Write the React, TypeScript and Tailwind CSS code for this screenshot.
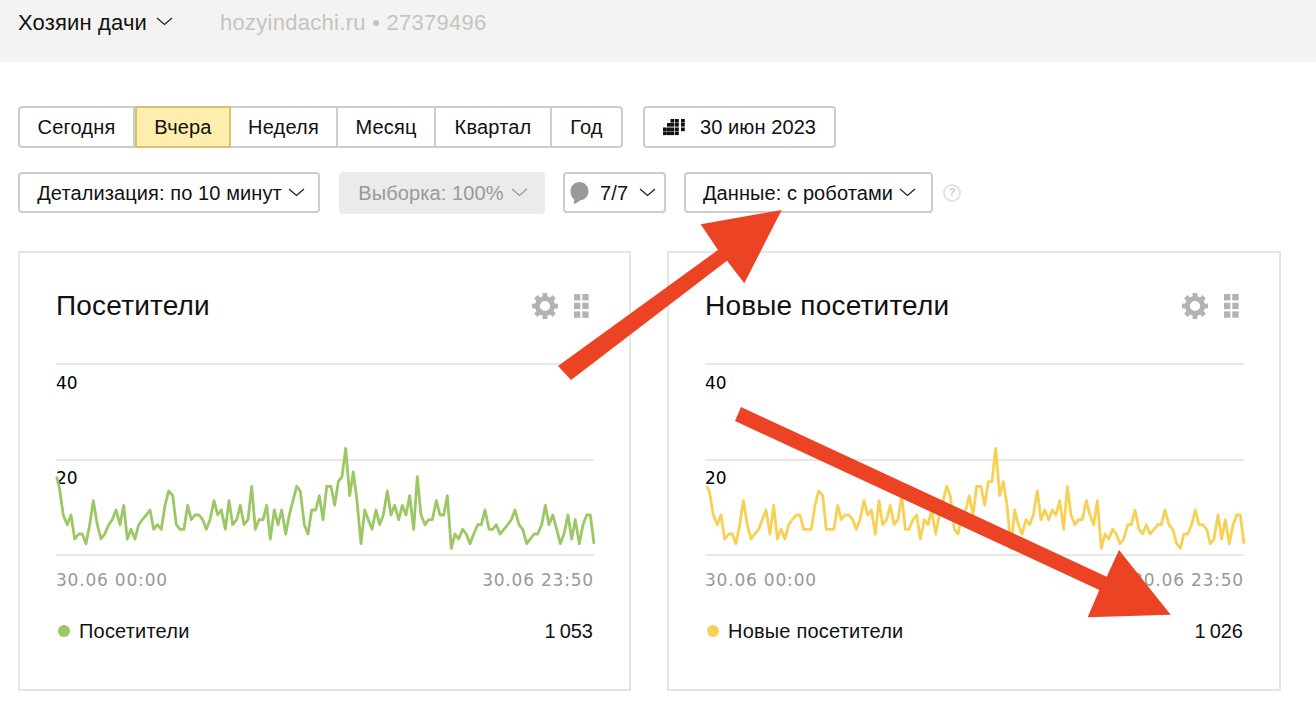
import React from "react";

type P = [number, number];
const map = (pts: number[], ox: number, cardX: number): P[] => {
  const out: P[] = [];
  for (let i = 0; i < pts.length; i += 2) out.push([ox + pts[i] / 3 - cardX, 430 + pts[i + 1] / 3 - 364]);
  return out;
};
const str = (p: P[]) => p.map((q) => `${q[0].toFixed(1)},${q[1].toFixed(1)}`).join(" ");

const g1 = [50,143,58,175,70,258,82,287,93,258,104,330,116,315,127,315,138,344,149,287,160,215,172,287,183,330,194,315,206,287,217,272,228,243,240,287,251,229,262,330,273,301,285,330,296,287,307,272,319,258,330,243,341,301,352,287,364,301,375,229,386,186,398,200,409,287,420,301,432,301,443,229,454,272,465,258,477,258,488,272,499,301,510,272,522,215,533,258,544,243,556,301,567,215,578,287,590,272,601,229,612,287,624,272,635,172,646,301,657,272,669,272,680,229,691,330,703,243,714,287,725,243,737,315,748,258,770,172,781,186,793,287,804,315,815,243,827,243,838,200,849,272,860,172];
const g2 = [33,172,44,229,55,158,66,143,77,58,89,200,100,129,111,215,123,344,134,243,145,272,156,301,168,243,179,287,190,258,202,186,213,258,224,229,236,272,247,229,258,258,269,200,281,301,292,143,303,258,315,287,326,272,337,272,349,215,360,258,371,258,382,200,394,358,405,315,416,330,428,301,439,315,450,344,461,315,473,287,484,287,495,243,507,301,518,301,529,287,540,315,552,301,563,287,574,272,585,243,597,287,608,301,620,344,631,330,642,315,653,315,665,287,676,229,687,287,698,258,710,301,721,344,732,315,744,258,755,330,766,272,778,344,789,287,800,258,811,258,822,344];
const y1 = [50,172,58,186,70,258,82,287,93,258,104,330,116,315,127,315,138,344,149,287,160,215,172,287,183,330,194,315,206,301,217,272,228,243,240,315,251,229,262,330,273,301,285,330,296,287,307,272,319,258,330,258,341,301,352,301,364,301,375,229,386,186,398,200,409,301,420,301,432,301,443,229,454,272,465,258,477,258,488,272,499,301,510,272,522,215,533,258,544,243,556,315,567,215,578,287,590,272,601,229,612,287,624,272,635,200,646,301,657,301,669,272,680,258,691,330,703,272,714,287,725,243,737,315,748,258,770,172,781,200,793,301,804,315,815,258,827,243,838,200,849,258,860,172];
const y2 = [33,172,44,229,55,158,66,158,77,58,89,200,100,158,111,229,123,358,134,243,145,287,156,315,168,272,179,287,190,258,202,186,213,272,224,243,236,272,247,243,258,258,269,215,281,301,292,172,303,258,315,287,326,272,337,272,349,215,360,258,371,287,382,215,394,358,405,315,416,330,428,301,439,315,450,344,461,330,473,287,484,287,495,243,507,301,518,315,529,287,540,315,552,301,563,287,574,287,585,243,597,287,608,301,620,344,631,358,642,315,653,315,665,287,676,243,687,287,698,287,710,301,721,344,732,330,744,258,755,330,766,272,778,344,789,287,800,258,811,258,822,344];

const green = str([...map(g1, 40, 56), ...map(g2, 320, 56)]);
const yellow = str([...map(y1, 690, 705), ...map(y2, 970, 705)]);

const Chevron = ({ c = "#222" }: { c?: string }) => (
  <svg width="17" height="9" viewBox="0 0 17 9" fill="none" className="shrink-0">
    <path d="M1 1l7.500 6.500L16 1" stroke={c} strokeWidth="1.300" />
  </svg>
);

const Gear = () => (
  <svg width="26" height="26" viewBox="0 0 26 26">
    <circle cx="13" cy="13" r="7.600" fill="none" stroke="#b3b3b3" strokeWidth="5" />
    {[0, 45, 90, 135, 180, 225, 270, 315].map((a) => (
      <rect key={a} x="10.600" y="0" width="4.800" height="5" fill="#b3b3b3" transform={`rotate(${a} 13 13)`} />
    ))}
  </svg>
);

const Dots = () => (
  <svg width="15" height="24" viewBox="0 0 15 24" fill="#b3b3b3">
    {[0, 8.7, 17.4].map((y) => [0, 8.3].map((x) => <rect key={`${x}-${y}`} x={x} y={y} width="6.300" height="6.400" />))}
  </svg>
);

const Calendar = () => (
  <svg width="23" height="17" viewBox="0 0 23 17" fill="#111">
    {[
      [7.5, 0],[12, 0],[18, 0],
      [4, 4],[7.5, 4],[12, 4],[18, 4],
      [0, 8.5],[4, 8.5],[7.500, 8.5],[12, 8.5],[18, 8.5],
      [0, 12.5],[4, 12.5],[7.500, 12.5],[12, 12.5],
    ].map(([x, y]) => (
      <rect key={`${x}-${y}`} x={x} y={y} width="3.800" height="3.600" />
    ))}
  </svg>
);

const Bubble = () => (
  <svg width="19" height="22" viewBox="0 0 18 22" fill="#999" className="shrink-0">
    <path d="M9 0c5 0 9 4 9 9.300 0 5-3.800 8.600-8.400 9.100C7.500 20 5 21.500 2.800 22 3.600 20.500 3.900 19 3.500 17.200 1.300 15.500 0 12.700 0 9.300 0 4 4 0 9 0z" />
  </svg>
);

const segs = [
  { t: "Сегодня", w: "w-[117px]" },
  { t: "Вчера", w: "w-[96px]", on: true },
  { t: "Неделя", w: "w-[107px]" },
  { t: "Месяц", w: "w-[98px]" },
  { t: "Квартал", w: "w-[116px]" },
  { t: "Год", w: "w-[71px]" },
];

const btn = "h-[41px] flex items-center justify-center rounded-[4px] border-2 border-[#cdcdcd] bg-white text-[#111]";

const Card = ({
  title, legend, value, color, pts, w,
}: { title: string; legend: string; value: string; color: string; pts: string; w: string }) => (
  <div className={`${w} h-[440px] border-2 border-[#e5e5e5] pl-[36px] pr-[35px] flex flex-col`}>
    <div className="h-[110px] flex items-start justify-between">
      <div className="mt-[36px] text-[28px] leading-[34px] tracking-[0.2px] text-[#111]">{title}</div>
      <div className="mt-[40px] flex items-center gap-[16px] pr-[5px]">
        <Gear />
        <Dots />
      </div>
    </div>
    <div className="relative h-[193px] w-full flex flex-col justify-between">
      <div className="h-[2px] bg-[#e8e8e8]" />
      <div className="h-[2px] bg-[#e8e8e8]" />
      <div className="h-[2px] bg-[#e8e8e8]" />
      <div className="absolute left-0 top-[10px] font-['DejaVu_Sans'] text-[17px] leading-[20px] text-black">40</div>
      <div className="absolute left-0 top-[105px] font-['DejaVu_Sans'] text-[17px] leading-[20px] text-black">20</div>
      <svg className="absolute left-0 top-0 overflow-visible" width="538" height="192" fill="none">
        <polyline points={pts} stroke={color} strokeWidth="2.800" strokeLinejoin="round" />
      </svg>
    </div>
    <div className="mt-[14px] flex justify-between font-['DejaVu_Sans'] text-[17px] leading-[20px] tracking-[0.8px] text-[#999]">
      <span>30.06 00:00</span>
      <span>30.06 23:50</span>
    </div>
    <div className="mt-[29px] flex items-center justify-between text-[20px] leading-[24px] text-[#111]">
      <div className="flex items-center gap-[8px]">
        <span className="ml-[2px] h-[12px] w-[12px] rounded-full" style={{ backgroundColor: color }} />
        <span className="ml-[1px] tracking-[0.2px]">{legend}</span>
      </div>
      <span className="mr-[1px]">{value}</span>
    </div>
  </div>
);

export default function App() {
  return (
    <div className="relative h-[720px] w-[1316px] overflow-hidden bg-white font-['Liberation_Sans',Arial,sans-serif]">
      <header className="h-[62px] bg-[#f4f3f1] pl-[18px] pt-[10px] flex items-start text-[22px] leading-[26px] tracking-[0.15px]">
        <span className="text-[#111]">Хозяин дачи</span>
        <span className="ml-[9px] mt-[7px]"><Chevron /></span>
        <span className="ml-[47px] tracking-[0.28px] text-[#c4c4c4]">hozyindachi.ru • 27379496</span>
      </header>

      <div className="pl-[18px] pt-[44px]">
        <div className="flex gap-[20px] h-[42px]">
          <div className="flex text-[20px] tracking-[0.18px]">
            {segs.map((s, i) => (
              <div
                key={s.t}
                className={`${s.w} flex items-center justify-center border-y-2 ${
                  s.on ? "border-x-2 border-[#d9c26e] bg-[#fdeeae]" : "border-[#cdcdcd] border-r-2 bg-white"
                } ${i === 0 ? "rounded-l-[4px] border-l-2 border-r-0" : ""} ${i === 5 ? "rounded-r-[4px]" : ""} text-[#111]`}
              >
                {s.t}
              </div>
            ))}
          </div>
          <div className={`${btn} h-[42px] w-[193px] gap-[14px] text-[20px] tracking-[0.1px]`}>
            <Calendar />
            <span>30 июн 2023</span>
          </div>
        </div>

        <div className="mt-[24px] flex items-center h-[41px] text-[20px] tracking-[0.1px]">
          <div className={`${btn} w-[302px] gap-[6px] pl-[4px]`}>
            <span>Детализация: по 10 минут</span>
            <Chevron />
          </div>
          <div className="ml-[19px] w-[206px] h-[42px] flex items-center justify-center gap-[7px] rounded-[4px] bg-[#ebebeb] pl-[2px] text-[#999]">
            <span>Выборка: 100%</span>
            <Chevron c="#999" />
          </div>
          <div className={`${btn} ml-[18px] w-[103px] !justify-start pl-[5px] gap-[11px]`}>
            <Bubble />
            <span>7/7</span>
            <Chevron />
          </div>
          <div className={`${btn} ml-[18px] w-[249px] gap-[6px] pl-[2px]`}>
            <span>Данные: с роботами</span>
            <Chevron />
          </div>
          <div className="ml-[10px] h-[18px] w-[18px] rounded-full border-2 border-[#e2e2e2] flex items-center justify-center text-[11px] font-bold tracking-normal text-[#ccc]">?</div>
        </div>

        <div className="mt-[38px] flex gap-[36px]">
          <Card w="w-[613px]" title="Посетители" legend="Посетители" value={"1\u2009053"} color="#9cc765" pts={green} />
          <Card w="w-[614px]" title="Новые посетители" legend="Новые посетители" value={"1\u2009026"} color="#f7d154" pts={yellow} />
        </div>
      </div>

      <svg className="absolute left-0 top-0 pointer-events-none" width="1316" height="720" fill="#ec4324">
        <polygon points="558,366 718,250 700.700,224.300 781.700,210 744.300,283.300 727,260.700 571,380" />
        <polygon points="741,407 1106.700,576.700 1119,550 1170.700,614.700 1087.700,617.300 1099.300,590 735,421" />
      </svg>
    </div>
  );
}
